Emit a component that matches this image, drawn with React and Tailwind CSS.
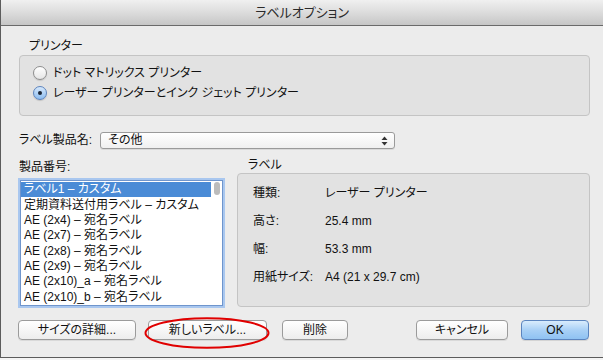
import React from "react";

const font = { fontFamily: '"Liberation Sans", "Noto Sans CJK JP", sans-serif' };

function Radio({ checked, label }) {
  return (
    <div className="flex items-center h-[20px]">
      {checked ? (
        <div className="w-[14px] h-[14px] rounded-full border border-[#5d84bd] bg-gradient-to-b from-[#d6e8fb] to-[#8dbdf0] flex items-center justify-center shadow-[0_1px_1px_rgba(0,0,0,0.15)]">
          <div className="w-[4px] h-[4px] rounded-full bg-[#1a2536]" />
        </div>
      ) : (
        <div className="w-[14px] h-[14px] rounded-full border border-[#8e8e8e] bg-gradient-to-b from-[#ffffff] to-[#e6e6e6] shadow-[0_1px_1px_rgba(0,0,0,0.12)]" />
      )}
      <span className="ml-[6px] text-[12px] leading-[15px] text-[#111]">{label}</span>
    </div>
  );
}

function Btn({ children, className = "" }) {
  return (
    <div
      className={
        "h-[20px] rounded-[4px] border border-[#9b9b9b] bg-gradient-to-b from-[#ffffff] to-[#ededed] shadow-[0_1px_0_rgba(0,0,0,0.08)] flex items-center justify-center text-[12px] leading-[15px] text-[#111] " +
        className
      }
    >
      {children}
    </div>
  );
}

const items = [
  "ラベル1 – カスタム",
  "定期資料送付用ラベル – カスタム",
  "AE (2x4) – 宛名ラベル",
  "AE (2x7) – 宛名ラベル",
  "AE (2x8) – 宛名ラベル",
  "AE (2x9) – 宛名ラベル",
  "AE (2x10)_a – 宛名ラベル",
  "AE (2x10)_b – 宛名ラベル",
];

const specs = [
  ["種類:", "レーザー プリンター"],
  ["高さ:", "25.4 mm"],
  ["幅:", "53.3 mm"],
  ["用紙サイズ:", "A4 (21 x 29.7 cm)"],
];

export default function App() {
  return (
    <div
      className="relative w-[603px] h-[360px] overflow-hidden bg-[#f4f4f4] [font-feature-settings:'palt']"
      style={font}
    >
      <div className="w-[603px] h-[358px] border-l border-b border-[#5c5c5c] bg-[#ececec] flex flex-col">
        {/* Title bar */}
        <div className="h-[26px] border-b border-[#6a6a6a] bg-gradient-to-b from-[#f0f0f0] via-[#dcdcdc] to-[#c6c6c6] flex items-center justify-center">
          <span className="text-[13px] leading-[16px] text-[#2a2a2a]">ラベルオプション</span>
        </div>

        {/* Body */}
        <div className="flex flex-col pl-[17px] pr-[13px]">
          <div className="mt-[13px] ml-[11px] text-[12px] leading-[15px] text-[#111]">プリンター</div>
          <div className="mt-[1px] ml-[1px] h-[61px] rounded-[4px] border border-[#c4c4c4] bg-[#e2e2e2] pt-[7px] pl-[13px]">
            <Radio checked={false} label="ドット マトリックス プリンター" />
            <Radio checked={true} label="レーザー プリンターとインク ジェット プリンター" />
          </div>

          {/* select row */}
          <div className="mt-[16px] flex items-center h-[17px]">
            <span className="ml-[1px] w-[81px] text-[12px] leading-[15px] text-[#111]">ラベル製品名:</span>
            <div className="w-[295px] h-[17px] rounded-[3px] border border-[#9a9a9a] bg-gradient-to-b from-[#ffffff] to-[#f0f0f0] shadow-[0_1px_0_rgba(0,0,0,0.08)] flex items-center pl-[7px] pr-[6px]">
              <span className="flex-1 text-[12px] leading-[15px] text-[#111]">その他</span>
              <svg width="7" height="10" viewBox="0 0 7 10">
                <path d="M3.5 0.5 L6.5 4 L0.5 4 Z" fill="#333" />
                <path d="M3.5 9.5 L6.5 6 L0.5 6 Z" fill="#333" />
              </svg>
            </div>
          </div>

          {/* columns */}
          <div className="flex">
            <div className="w-[207px] flex flex-col">
              <div className="mt-[11px] ml-[1px] text-[12px] leading-[15px] text-[#111]">製品番号:</div>
              <div className="mt-[5px] ml-[2px] w-[203px] h-[126px] bg-white border border-[#6f95cc] shadow-[0_0_0_2px_#a9c7ef] flex overflow-hidden">
                <div className="flex-1 flex flex-col pt-[1px]">
                  {items.map((t, i) => (
                    <div
                      key={i}
                      className={
                        "h-[16px] pl-[3px] flex items-center text-[12px] leading-[15px] whitespace-nowrap " +
                        (i === 0 ? "bg-[#4a8bd6] text-white" : "text-[#111]")
                      }
                    >
                      {t}
                    </div>
                  ))}
                </div>
                <div className="w-[11px] flex justify-center pt-[1px]">
                  <div className="w-[6px] h-[13px] rounded-[3px] bg-[#bcbcbc]" />
                </div>
              </div>
            </div>

            <div className="ml-[12px] w-[353px] flex flex-col">
              <div className="mt-[9px] ml-[11px] text-[12px] leading-[15px] text-[#111]">ラベル</div>
              <div className="h-[134px] rounded-[4px] border border-[#c4c4c4] bg-[#e2e2e2] pt-[5px] pl-[15px]">
                {specs.map(([k, v], i) => (
                  <div key={i} className="h-[28px] flex items-center text-[12px] leading-[15px] text-[#111]">
                    <span className="w-[72px]">{k}</span>
                    <span>{v}</span>
                  </div>
                ))}
              </div>
            </div>
          </div>

          {/* buttons */}
          <div className="mt-[13px] flex pr-[1px]">
            <Btn className="w-[118px]">サイズの詳細...</Btn>
            <Btn className="ml-[12px] w-[119px]">新しいラベル...</Btn>
            <Btn className="ml-[15px] w-[66px]">削除</Btn>
            <Btn className="ml-auto w-[92px]">キャンセル</Btn>
            <div className="ml-[13px] w-[68px] h-[20px] rounded-[4px] border border-[#5b84bf] bg-gradient-to-b from-[#d9ecfd] via-[#a9d0f6] to-[#8fc2f2] shadow-[0_1px_0_rgba(0,0,0,0.1)] flex items-center justify-center text-[12px] leading-[15px] text-[#111]">
              OK
            </div>
          </div>
        </div>
      </div>

      {/* red ellipse annotation */}
      <svg className="absolute left-[144px] top-[317px]" width="126" height="32" viewBox="0 0 126 32">
        <ellipse cx="63" cy="16" rx="61.5" ry="14.8" fill="none" stroke="#e00000" strokeWidth="2" />
      </svg>
    </div>
  );
}
